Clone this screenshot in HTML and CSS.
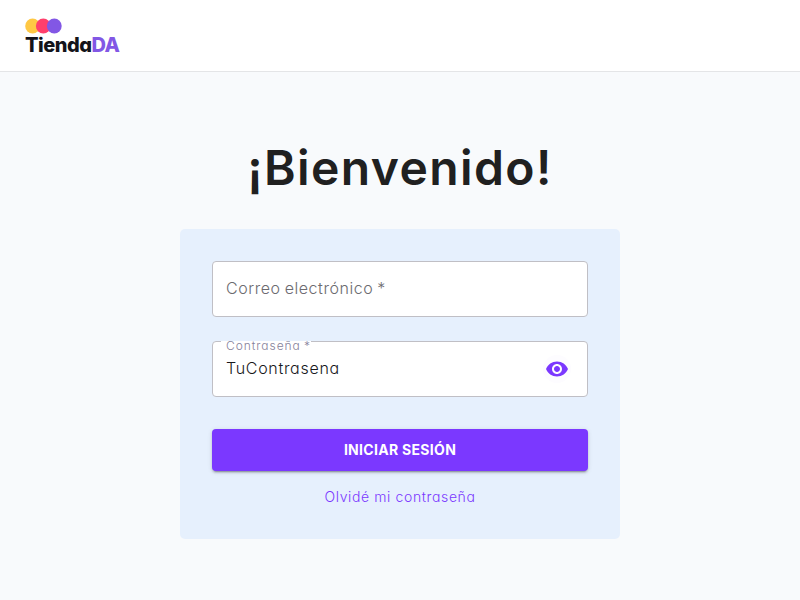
FILE: index.html
```html
<!DOCTYPE html>
<html lang="es">
<head>
<meta charset="utf-8">
<title>TiendaDA</title>
<link rel="stylesheet" href="styles.css">
</head>
<body>
<header class="topbar">
  <a class="brand">
    <svg class="brand-dots" width="38" height="16" viewBox="0 0 38 16" aria-hidden="true">
      <circle cx="7.6" cy="8" r="7.4" fill="#ffc844"/>
      <circle cx="18.3" cy="8" r="7.4" fill="#ff3f6c"/>
      <circle cx="29.3" cy="8" r="7.4" fill="#8257e5"/>
    </svg>
    <span class="brand-name">Tienda<span class="brand-accent">DA</span></span>
  </a>
</header>
<main class="page">
  <h1 class="title">¡Bienvenido!</h1>
  <form class="card">
    <div class="field"><span class="placeholder">Correo electrónico&nbsp;*</span></div>
    <div class="field field-password">
      <span class="label"><span class="label-text">Contraseña&nbsp;*</span></span>
      <span class="value">TuContrasena</span>
      <span class="toggle">
        <svg width="24" height="24" viewBox="0 0 24 24" aria-hidden="true"><path fill="currentColor" d="M12 4.5C7 4.5 2.73 7.61 1 12c1.73 4.39 6 7.5 11 7.5s9.27-3.11 11-7.5c-1.73-4.39-6-7.5-11-7.5zM12 17c-2.76 0-5-2.24-5-5s2.24-5 5-5 5 2.24 5 5-2.24 5-5 5zm0-8c-1.66 0-3 1.34-3 3s1.34 3 3 3 3-1.34 3-3-1.34-3-3-3z"/></svg>
      </span>
    </div>
    <button class="submit" type="button"><span class="submit-text">INICIAR SESIÓN</span></button>
    <a class="forgot"><span class="forgot-text">Olvidé mi contraseña</span></a>
  </form>
</main>
</body>
</html>
```
FILE: styles.css
```css
* { box-sizing: border-box; }
body {
  margin: 0;
  min-height: 600px;
  background: #f8fafc;
  color: #202022;
  font-family: Inter, "Open Sans", sans-serif;
  font-feature-settings: "cv11";
}
.topbar {
  height: 72px;
  padding: 18px 25px 0;
  background: #fff;
  border-bottom: 1px solid #e4e5e7;
}
.brand { display: flex; flex-direction: column; align-items: flex-start; }
.brand-dots { display: block; }
.brand-name {
  font-size: 20px;
  font-weight: 800;
  line-height: 22px;
  letter-spacing: -0.5px;
  color: #13131a;
}
.brand-accent { color: #8257e5; }
.page { display: flex; flex-direction: column; align-items: center; padding-top: 60px; }
.title {
  margin: 0;
  height: 97px;
  font-size: 48px;
  line-height: 72px;
  font-weight: 600;
  color: #202020;
  letter-spacing: 1.4px;
  white-space: nowrap;
}
.card {
  width: 440px;
  height: 310px;
  padding: 32px;
  border-radius: 5px;
  background: #e6f0fd;
}
.field {
  position: relative;
  display: flex;
  align-items: center;
  height: 56px;
  margin-bottom: 24px;
  padding: 0 13px;
  border: 1px solid #c0bfc5;
  border-radius: 4px;
  background: #fff;
  font-size: 16px;
  font-weight: 300;
  white-space: nowrap;
}
.field-password { margin-bottom: 32px; }
.placeholder {
  padding-bottom: 2px;
  color: #6c6b70;
  letter-spacing: 0.55px;
  word-spacing: -1px;
}
.label {
  position: absolute;
  top: -1px;
  left: 8px;
  width: 90px;
  padding-left: 5px;
  background: #fff;
  color: #85819a;
  font-size: 12px;
  line-height: 10px;
  letter-spacing: 0.95px;
  word-spacing: -1px;
}
.value {
  padding-bottom: 2px;
  color: #18181c;
  letter-spacing: 0.7px;
}
.toggle {
  display: flex;
  align-items: center;
  justify-content: center;
  width: 28px;
  height: 28px;
  margin: 0 3px 1px auto;
  border-radius: 50%;
  background: #fdfcff;
  color: #7b38ff;
}
.submit {
  display: block;
  width: 100%;
  height: 42px;
  padding: 0;
  border: 0;
  border-radius: 4px;
  background: #7b38ff;
  box-shadow: 0 3px 1px -2px rgba(0,0,0,.2), 0 2px 2px rgba(0,0,0,.14), 0 1px 5px rgba(0,0,0,.12);
  color: #fff;
  font: 700 14px/42px Inter, sans-serif;
  letter-spacing: 0.3px;
}
.forgot {
  display: block;
  margin-top: 15px;
  color: #7b38ff;
  font-size: 14px;
  font-weight: 300;
  line-height: 22px;
  letter-spacing: 0.62px;
  text-align: center;
}
```
